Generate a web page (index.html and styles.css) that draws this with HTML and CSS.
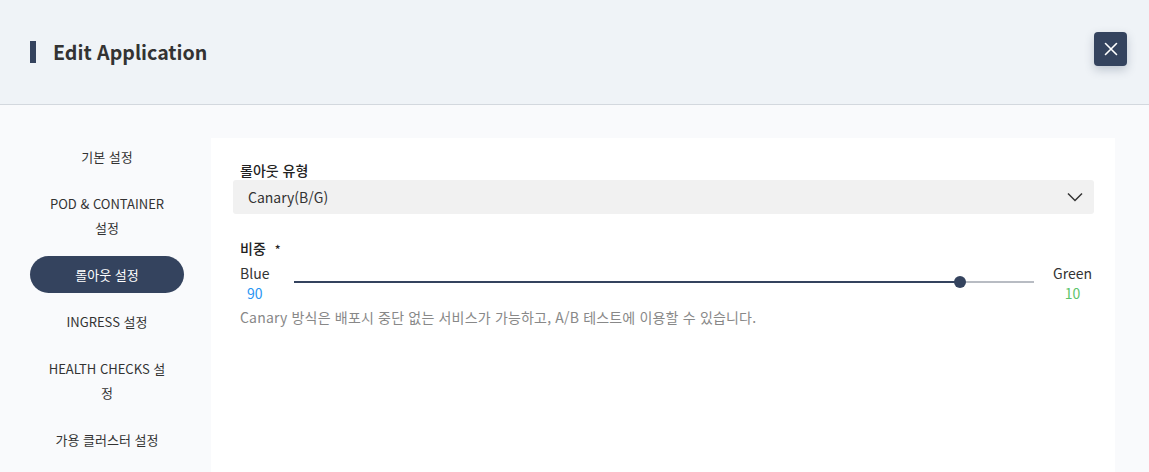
FILE: index.html
```html
<!DOCTYPE html>
<html lang="ko">
<head>
<meta charset="utf-8">
<link rel="stylesheet" href="styles.css">
</head>
<body>
<div class="modal">
  <header class="header">
    <h1 class="title">Edit Application</h1>
    <button class="close" aria-label="close">
      <svg width="14" height="14" viewBox="0 0 14 14"><path d="M1.5 1.5 L12.5 12.5 M12.5 1.5 L1.5 12.5" stroke="#fff" stroke-width="1.6" stroke-linecap="round"/></svg>
    </button>
  </header>
  <div class="body">
    <nav class="side">
      <div class="item">기본 설정</div>
      <div class="item">POD &amp; CONTAINER 설정</div>
      <div class="item active">롤아웃 설정</div>
      <div class="item">INGRESS 설정</div>
      <div class="item">HEALTH CHECKS 설정</div>
      <div class="item">가용 클러스터 설정</div>
    </nav>
    <main class="panel">
      <div class="field">
        <div class="label">롤아웃 유형</div>
        <div class="select">
          <span>Canary(B/G)</span>
          <svg width="16" height="10" viewBox="0 0 16 10"><path d="M1 1.5 L8 8.5 L15 1.5" fill="none" stroke="#333" stroke-width="1.5"/></svg>
        </div>
      </div>
      <div class="field weight">
        <div class="label">비중 <span class="req">*</span></div>
        <div class="slider-row">
          <div class="end blue"><span class="name">Blue</span><span class="num">90</span></div>
          <div class="slider">
            <div class="track"><div class="fill" style="width:90%"></div><div class="thumb" style="left:90%"></div></div>
          </div>
          <div class="end green"><span class="name">Green</span><span class="num">10</span></div>
        </div>
        <p class="help">Canary 방식은 배포시 중단 없는 서비스가 가능하고, A/B 테스트에 이용할 수 있습니다.</p>
      </div>
    </main>
  </div>
</div>
</body>
</html>
```
FILE: styles.css
```css
* { box-sizing: border-box; }
html, body { margin: 0; padding: 0; }
body {
  font-family: "Noto Sans CJK KR", "Noto Sans", sans-serif;
  color: #333;
  background: #f9fafc;
  width: 1149px;
  height: 472px;
  overflow: hidden;
}
.modal {
  height: 472px;
  display: flex;
  flex-direction: column;
}
.header {
  height: 105px;
  flex: none;
  background: #eff3f7;
  border-bottom: 1px solid #d3d8de;
  display: flex;
  align-items: center;
  justify-content: space-between;
  padding: 0 22px 0 30px;
}
.title {
  margin: 0;
  font-size: 19.6px;
  font-weight: 700;
  color: #333;
  border-left: 6px solid #34435e;
  padding-left: 17px;
  line-height: 22px;
  margin-top: -1px;
}
.close {
  width: 33px;
  height: 34px;
  border: 0;
  border-radius: 4px;
  background: #34435e;
  display: flex;
  align-items: center;
  justify-content: center;
  box-shadow: 0 4px 10px rgba(52, 67, 94, 0.25);
  margin-top: -7px;
  padding: 0;
}
.body {
  flex: 1;
  min-height: 0;
  display: flex;
  padding-top: 33px;
}
.side {
  width: 211px;
  padding: 0 27px 0 30px;
  display: flex;
  flex-direction: column;
  gap: 11px;
  padding-top: 1px;
}
.item {
  font-size: 13px;
  line-height: 24px;
  padding: 6px 16px;
  text-align: center;
  color: #333;
  border-radius: 19px;
}
.item.active {
  background: #34435e;
  color: #fff;
  padding: 6.5px 16px;
  margin-top: -1px;
}
.panel {
  width: 904px;
  background: #fff;
  padding: 22px 21px 0 22px;
}
.label {
  font-size: 14px;
  font-weight: 500;
  color: #222;
  padding-left: 7px;
  line-height: 20px;
}
.req { font-size: 12px; margin-left: 5px; }
.select {
  height: 34px;
  background: #f1f1f1;
  border-radius: 3px;
  display: flex;
  align-items: center;
  justify-content: space-between;
  padding: 0 11px 0 15px;
  font-size: 14px;
  color: #333;
}
.weight { margin-top: 24px; }
.slider-row {
  display: flex;
  align-items: flex-start;
  margin-top: 4px;
  padding-right: 2px;
}
.end {
  display: flex;
  flex-direction: column;
  align-items: center;
  font-size: 14px;
  line-height: 20px;
}
.end.blue { padding-left: 7px; }
.blue .num { color: #2996f3; }
.green .num { color: #5cc46b; }
.slider {
  flex: 1;
  padding: 18px 0 0 0;
  margin: 0 19px 0 25px;
}
.track {
  position: relative;
  height: 2px;
  background: #b8bcc3;
}
.fill {
  height: 2px;
  background: #34435e;
}
.thumb {
  position: absolute;
  top: -5px;
  width: 12px;
  height: 12px;
  margin-left: -6px;
  border-radius: 50%;
  background: #34435e;
}
.help {
  margin: 4px 0 0 7px;
  font-size: 14px;
  letter-spacing: 0.18px;
  color: #888;
  line-height: 20px;
}
```
